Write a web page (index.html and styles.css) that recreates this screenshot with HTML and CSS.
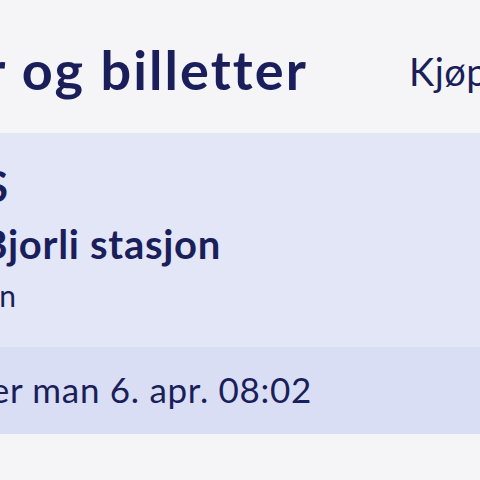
FILE: index.html
```html
<!DOCTYPE html>
<html lang="no">
<head>
<meta charset="utf-8">
<link rel="stylesheet" href="styles.css">
</head>
<body>
<div class="screen">
  <header class="topbar">
    <div class="clip title-clip"><h1 class="title">Reiser og billetter</h1></div>
    <a class="buy">Kjøp</a>
  </header>
  <section class="ticket">
    <div class="ticket-main">
      <div class="clip from-clip"><div class="from">Oslo S</div></div>
      <div class="clip to-clip"><div class="to">Til Bjorli stasjon</div></div>
      <div class="clip who-clip"><div class="who">1 voksen</div></div>
    </div>
    <div class="ticket-foot">
      <div class="clip exp-clip"><div class="exp">Utløper man 6. apr. 08:02</div></div>
    </div>
  </section>
</div>
</body>
</html>
```
FILE: styles.css
```css
html, body {
  margin: 0;
  padding: 0;
  background: #f5f5f8;
  overflow: hidden;
}
body {
  width: 480px;
  height: 480px;
  font-family: Lato, "Noto Sans", sans-serif;
  color: #1a1f5c;
}
.screen {
  display: flex;
  flex-direction: column;
}
.clip {
  display: flex;
  justify-content: flex-end;
  white-space: nowrap;
}
.clip > * {
  flex-shrink: 0;
}
.topbar {
  height: 133px;
  display: flex;
  align-items: flex-start;
}
.title-clip {
  width: 308px;
  padding-top: 37px;
}
.title {
  margin: 0;
  font-size: 54px;
  font-weight: 700;
  line-height: 66px;
  letter-spacing: 2.1px;
}
.buy {
  margin-left: 101px;
  padding-top: 46px;
  font-size: 38px;
  line-height: 50px;
  font-weight: 400;
  letter-spacing: 0.5px;
}
.ticket-main {
  background: #e3e6f7;
  height: 214px;
  display: flex;
  flex-direction: column;
}
.from-clip {
  width: 8px;
  margin-top: 28px;
}
.from {
  font-size: 42px;
  font-weight: 700;
  line-height: 50px;
}
.to-clip {
  width: 221px;
  margin-top: 8px;
}
.to {
  font-size: 40px;
  font-weight: 700;
  line-height: 50px;
  letter-spacing: 0.7px;
}
.who-clip {
  width: 16px;
  margin-top: 6px;
}
.who {
  font-size: 30px;
  line-height: 40px;
}
.ticket-foot {
  background: #d9def4;
  height: 87px;
  display: flex;
  align-items: center;
}
.exp-clip {
  width: 312px;
  margin-top: -3px;
}
.exp {
  font-size: 35px;
  line-height: 44px;
  letter-spacing: 0.7px;
}
```
